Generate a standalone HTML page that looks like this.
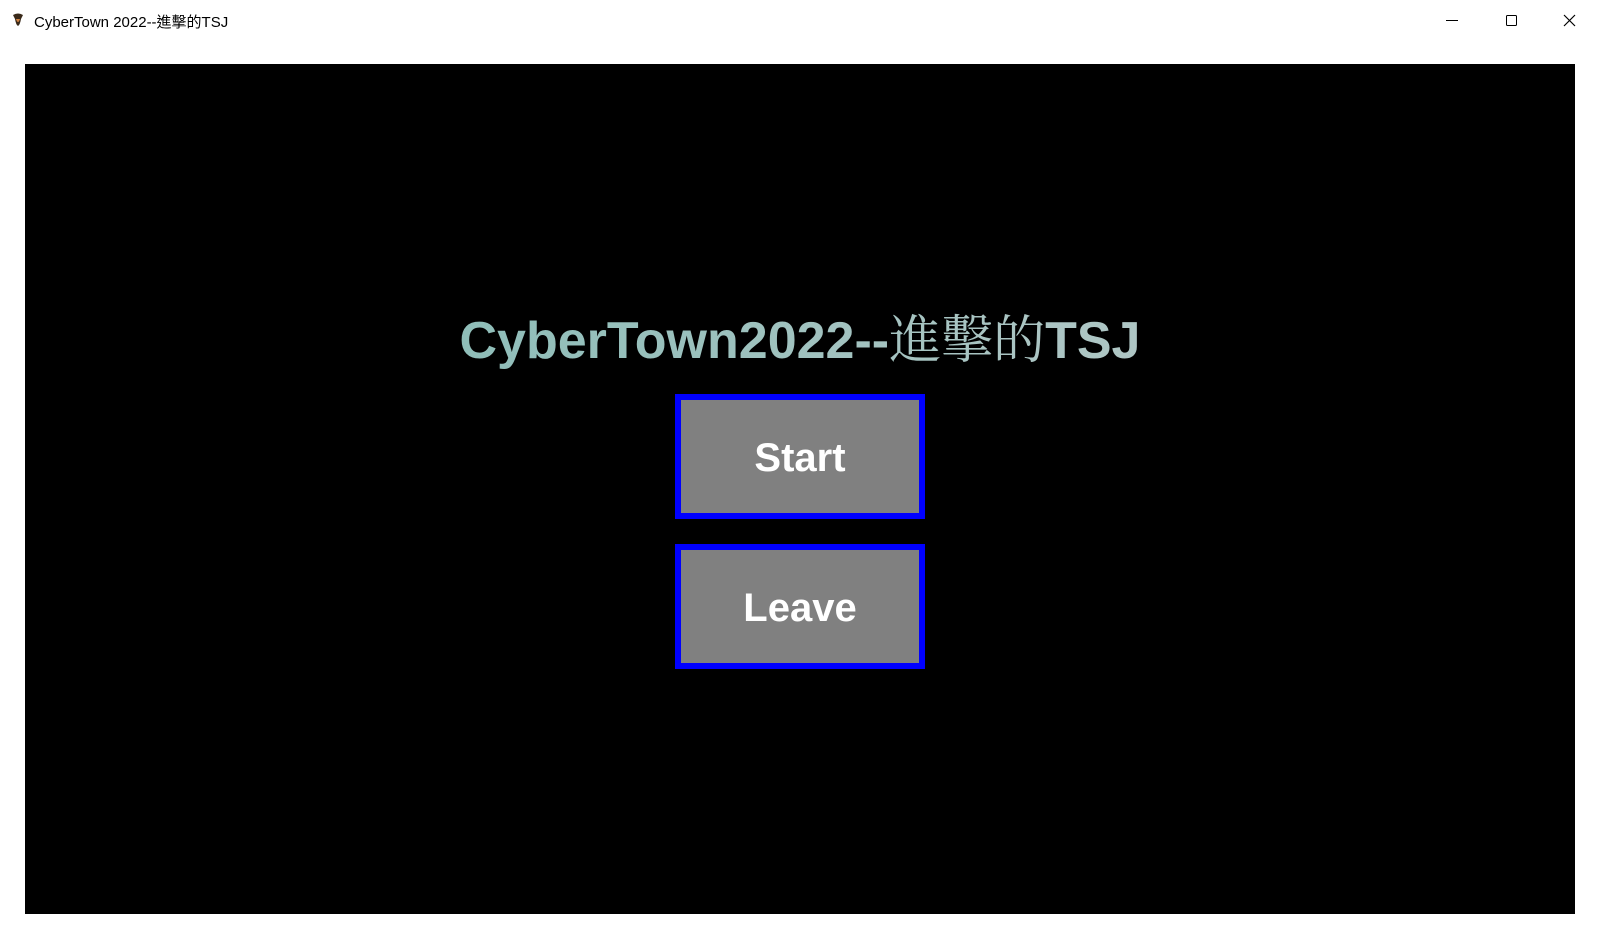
<!DOCTYPE html>
<html><head><meta charset="utf-8"><style>
html,body{margin:0;padding:0;width:1600px;height:937px;background:#fff;overflow:hidden;font-family:"Liberation Sans","Noto Sans CJK TC",sans-serif;position:relative}
.tb{position:absolute;left:0;top:0;width:1600px;height:40px}
.tt{position:absolute;left:34px;top:11px;font-size:15px;color:#000}
.game{position:absolute;left:25px;top:64px;width:1550px;height:850px;background:#000}
.title{position:absolute;left:0;width:1600px;top:298px;text-align:center;font-size:52px;font-weight:bold;letter-spacing:0px;
background:linear-gradient(90deg,#78b8b0,#a8c4c2 60%,#c0cccc);-webkit-background-clip:text;background-clip:text;color:transparent;white-space:nowrap}
.title span{font-weight:normal;font-family:"Noto Serif CJK SC",serif}
.btn{position:absolute;left:675px;width:238px;height:113px;border:6px solid #0000ff;background:#808080;color:#fff;font-weight:bold;font-size:40px;text-align:center;line-height:117px}
</style></head><body>
<div class="tb">
<svg style="position:absolute;left:12px;top:13px" width="12" height="14"><path d="M1 2 Q6 -1 11 2 L9 6 Q8 12 6 13 Q4 12 3 6Z" fill="#3a2a1a"/><path d="M4 6 Q6 12 8 6Z" fill="#d08040"/></svg>
<div class="tt">CyberTown 2022--進擊的TSJ</div>
<svg style="position:absolute;left:1446px;top:14px" width="140" height="14"><line x1="0" y1="6.5" x2="12" y2="6.5" stroke="#000" stroke-width="1"/><rect x="60.5" y="1.5" width="10" height="10" rx="1" fill="none" stroke="#000"/><path d="M129 1 L118 12 M118 1 L129 12" stroke="#000" stroke-width="1.2"/></svg>
</div>
<div class="game"></div>
<div class="title">CyberTown2022--<span>進擊的</span>TSJ</div>
<div class="btn" style="top:394px">Start</div>
<div class="btn" style="top:544px">Leave</div>
</body></html>
